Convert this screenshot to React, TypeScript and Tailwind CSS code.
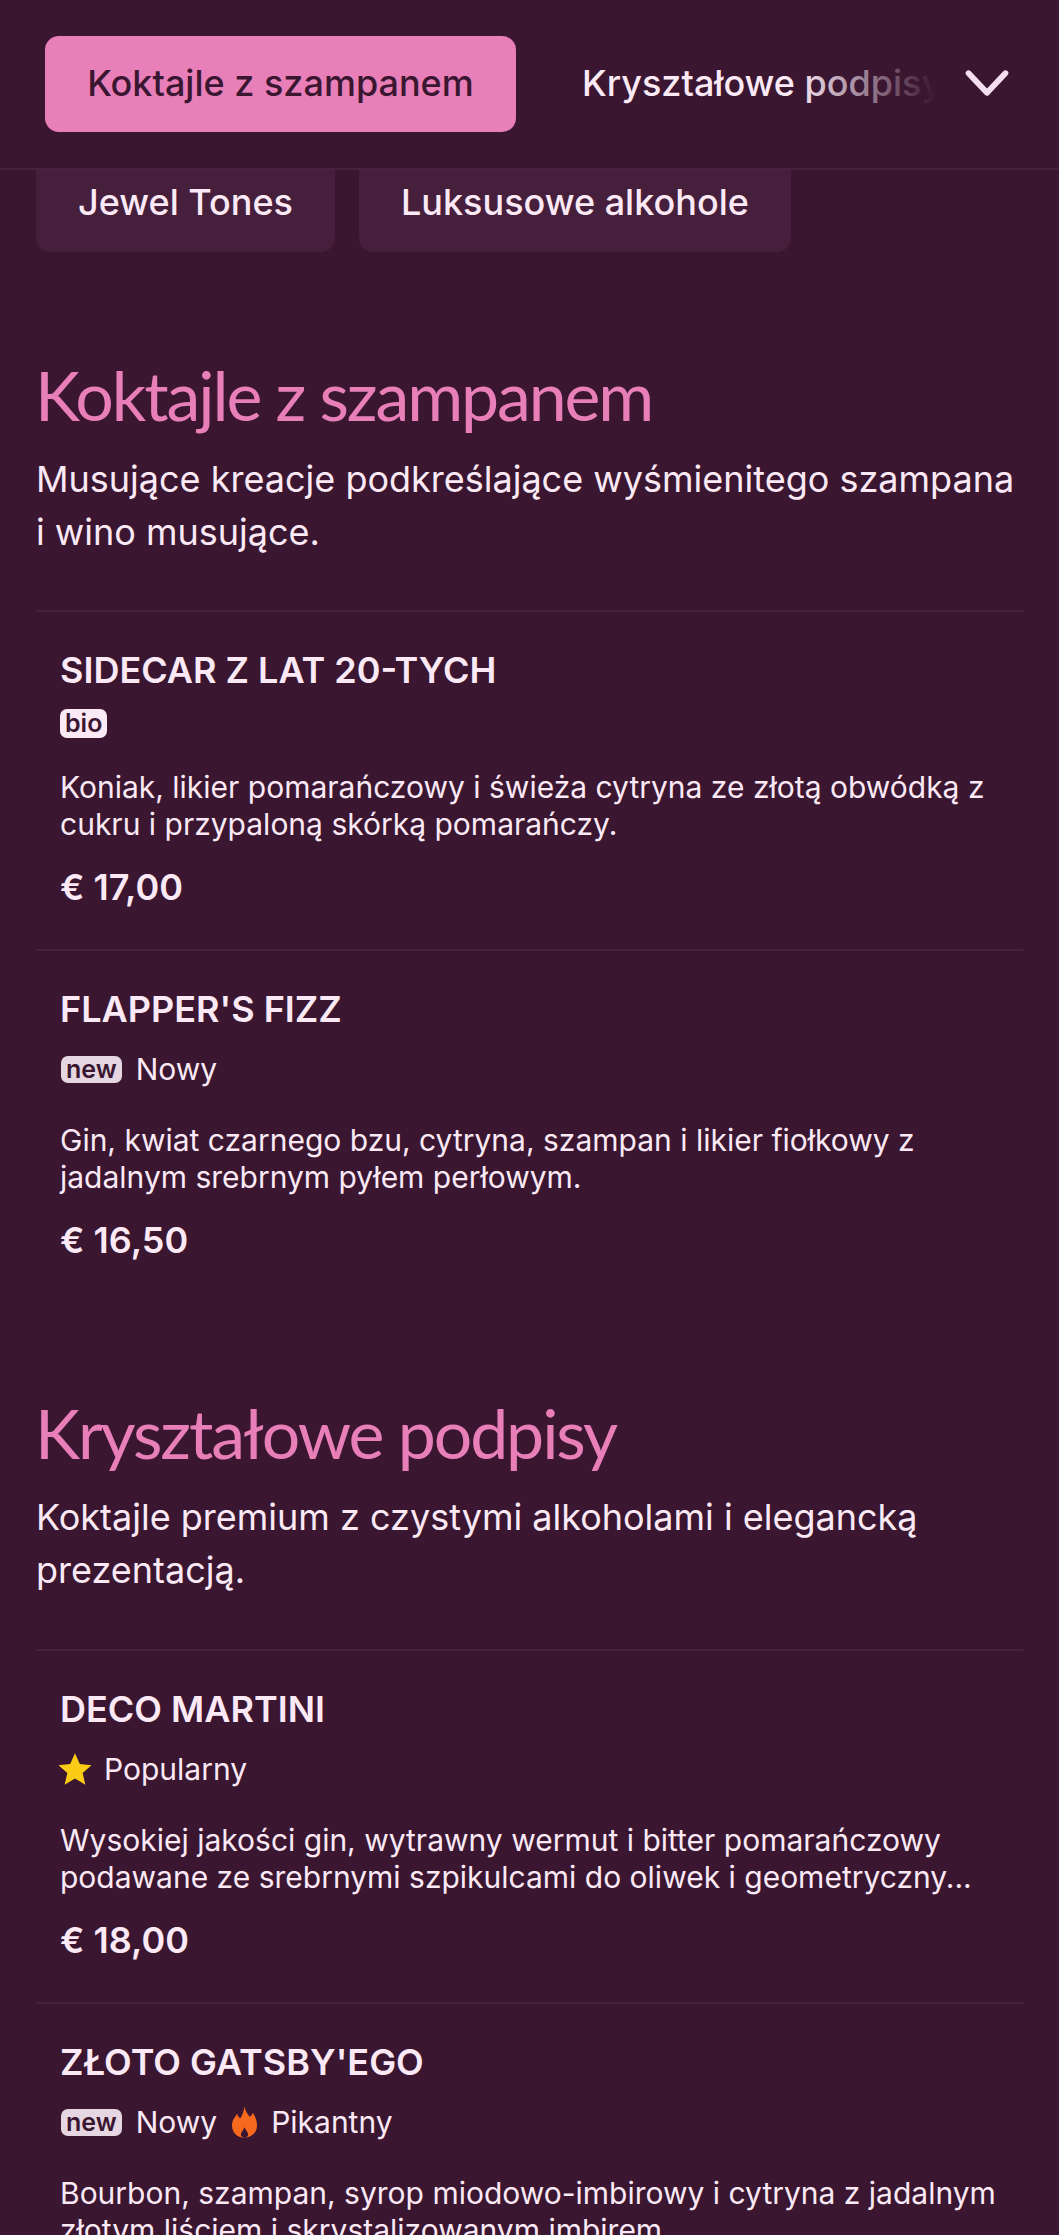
const inter = "font-['Inter',sans-serif]";

function Star() {
  return (
    <svg viewBox="0 0 24 24" className="w-[36px] h-[36px] shrink-0 -ml-[3px] -mr-[3px]" fill="#facc15">
      <path d="M12 1.500l3.200 7.200 7.800.8-5.900 5.200 1.800 7.800L12 18.400l-6.900 4.100 1.800-7.800L1 9.500l7.800-.8z" />
    </svg>
  );
}

function Flame() {
  return (
    <svg viewBox="0 0 24 30" className="w-[25px] h-[32px] shrink-0 ml-[1px]" fill="#f76a1e">
      <path fillRule="evenodd" d="M12 0C13 5 15 7 17 10C18.500 9 19.500 7.500 20 6C22.500 10 24 14 24 18C24 25 19 30 12 30C5 30 0 25 0 18C0 13 3 10 5 7C5.500 9 6.500 10.500 8 11.500C10 8 11.500 4 12 0ZM12 20C11 23 8.500 24.500 8.500 27C8.500 28.500 10 30 12 30C14 30 15.500 28.500 15.500 27C15.500 24.500 13 23 12 20Z" />
    </svg>
  );
}

function Item({ name, tags, tall, lines, price }: { name: string; tags: React.ReactNode; tall?: boolean; lines: string[]; price?: string }) {
  return (
    <div className="mx-[36px] px-[24px] pb-[39px] border-t-2 border-[#47223f]">
      <div className="pt-[37px] text-[36px] leading-[42px] font-semibold text-[#fbe9f5]">{name}</div>
      <div className={`mt-[17px] flex items-center gap-[14px] text-[30px] text-[#fbe9f5] ${tall ? 'h-[44px]' : 'h-[30px]'}`}>{tags}</div>
      <div className="mt-[31px] text-[30px] leading-[36.500px] text-[#fbe9f5] whitespace-nowrap">
        {lines.map((l) => (
          <div key={l}>{l}</div>
        ))}
      </div>
      {price && <div className="mt-[22px] text-[36px] leading-[46px] font-semibold text-[#fbe9f5]">{price}</div>}
    </div>
  );
}

function Badge({ children, dim }: { children: React.ReactNode; dim?: boolean }) {
  return (
    <span className={`inline-flex items-center justify-center rounded-[7px] px-[5px] text-[25px] leading-none font-semibold text-[#3a1631] ${dim ? 'h-[27px] ml-[1px] bg-[#e6d6e1]' : 'h-[29px] bg-[#fbe9f5]'}`}>
      {children}
    </span>
  );
}

function Section({ title, desc }: { title: string; desc: string[] }) {
  return (
    <div className="px-[36px]">
      <h2 className="font-['Lato',sans-serif] font-normal text-[68px] leading-[80px] tracking-[-2.100px] -ml-[1px] text-[#e87fb8]">{title}</h2>
      <div className="mt-[18px] text-[36px] leading-[53px] text-[#fbe9f5] whitespace-nowrap">
        {desc.map((d) => (
          <div key={d}>{d}</div>
        ))}
      </div>
    </div>
  );
}

export default function App() {
  return (
    <div className={`${inter} w-[1059px] h-[2235px] overflow-hidden bg-[#3a1631]`}>
      <header className="h-[170px] border-b-2 border-[#47223f] flex items-start pl-[45px]">
        <button className="mt-[36px] w-[471px] h-[96px] rounded-[14px] bg-[#e87fb8] pb-[2px] text-[36px] font-medium text-[#3a1631] flex items-center justify-center">
          Koktajle z szampanem
        </button>
        <div className="relative mt-[36px] ml-[66px] w-[354px] h-[96px] pb-[2px] flex items-center overflow-hidden whitespace-nowrap text-[36px] font-medium text-[#fbe9f5]">
          <span>Kryształowe podpisy</span>
          <div className="absolute right-0 top-0 bottom-0 w-[140px] bg-gradient-to-r from-[#3a163100] to-[#3a1631]" />
        </div>
        <svg viewBox="0 0 24 24" className="absolute left-[961px] top-[57px] w-[52px] h-[52px]" fill="none" stroke="#f5dfee" strokeWidth="2.700" strokeLinecap="round" strokeLinejoin="round">
          <path d="M3.500 7.500L12 16.500 20.500 7.500" />
        </svg>
      </header>

      <div className="flex gap-[24px] px-[36px]">
        <div className="h-[82px] pb-[18px] rounded-b-[14px] bg-[#461f3d] px-[42px] flex items-center text-[36px] font-medium text-[#fbe9f5]">Jewel Tones</div>
        <div className="h-[82px] pb-[18px] rounded-b-[14px] bg-[#461f3d] px-[42px] flex items-center text-[36px] font-medium text-[#fbe9f5]">Luksusowe alkohole</div>
      </div>

      <div className="mt-[103px]">
        <Section title="Koktajle z szampanem" desc={["Musujące kreacje podkreślające wyśmienitego szampana", "i wino musujące."]} />
      </div>
      <div className="mt-[51px]">
        <Item name="SIDECAR Z LAT 20-TYCH" tags={<Badge>bio</Badge>} lines={["Koniak, likier pomarańczowy i świeża cytryna ze złotą obwódką z", "cukru i przypaloną skórką pomarańczy."]} price="€ 17,00" />
        <Item tall name="FLAPPER'S FIZZ" tags={<><Badge dim>new</Badge><span>Nowy</span></>} lines={["Gin, kwiat czarnego bzu, cytryna, szampan i likier fiołkowy z", "jadalnym srebrnym pyłem perłowym."]} price="€ 16,50" />
      </div>
      <div className="mt-[91px]">
        <Section title="Kryształowe podpisy" desc={["Koktajle premium z czystymi alkoholami i elegancką", "prezentacją."]} />
      </div>
      <div className="mt-[52px]">
        <Item tall name="DECO MARTINI" tags={<><Star /><span>Popularny</span></>} lines={["Wysokiej jakości gin, wytrawny wermut i bitter pomarańczowy", "podawane ze srebrnymi szpikulcami do oliwek i geometryczny..."]} price="€ 18,00" />
        <Item tall name="ZŁOTO GATSBY'EGO" tags={<><Badge dim>new</Badge><span>Nowy</span><Flame /><span>Pikantny</span></>} lines={["Bourbon, szampan, syrop miodowo-imbirowy i cytryna z jadalnym", "złotym liściem i skrystalizowanym imbirem."]} />
      </div>
    </div>
  );
}
